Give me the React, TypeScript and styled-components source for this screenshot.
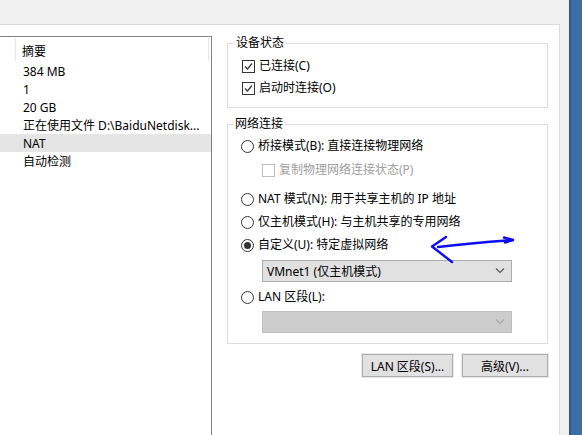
import React from 'react'
import styled, { createGlobalStyle } from 'styled-components'

const GlobalStyle = createGlobalStyle`
  html, body {
    margin: 0;
    padding: 0;
    overflow: hidden;
    background: #ffffff;
  }
  body {
    font-family: "Noto Sans", "Noto Sans CJK SC", sans-serif;
    font-size: 12px;
    color: #000000;
  }
`

const rows = [
  { text: '384 MB' },
  { text: '1' },
  { text: '20 GB' },
  { text: '正在使用文件 D:\\BaiduNetdisk...' },
  { text: 'NAT', selected: true },
  { text: '自动检测' },
]

const CheckMark = ({ disabled }: { disabled?: boolean }) => (
  <CheckBox $disabled={disabled}>
    {!disabled && (
      <svg width="11" height="11" viewBox="0 0 11 11">
        <path d="M2 5.5 L4.5 8 L9 2.5" fill="none" stroke="#333" strokeWidth="1.2" />
      </svg>
    )}
  </CheckBox>
)

const Chevron = ({ color }: { color: string }) => (
  <svg width="10" height="6" viewBox="0 0 10 6">
    <path d="M1 0.5 L5 4.5 L9 0.5" fill="none" stroke={color} strokeWidth="1.1" />
  </svg>
)

const App = () => {
  return (
    <Window>
      <GlobalStyle />
      <Dialog>
        <TopBar />
        <Body>
          <TabPage>
            <ListBox>
              <ListHeader>
                <HeaderCell $width={16} />
                <HeaderCell $width={193}>摘要</HeaderCell>
              </ListHeader>
              {rows.map((row, index) => (
                <ListRow key={index} $selected={row.selected}>
                  {row.text}
                </ListRow>
              ))}
            </ListBox>

            <RightPane>
              <GroupBox>
                <GroupTitle>设备状态</GroupTitle>
                <CheckRows>
                  <OptionRow $height={22}>
                    <CheckMark />
                    <Label>已连接(C)</Label>
                  </OptionRow>
                  <OptionRow $height={22}>
                    <CheckMark />
                    <Label>启动时连接(O)</Label>
                  </OptionRow>
                </CheckRows>
              </GroupBox>

              <NetGroup>
                <GroupTitle>网络连接</GroupTitle>
                <NetRows>
                  <OptionRow $top={4}>
                    <Radio />
                    <Label>桥接模式(B): 直接连接物理网络</Label>
                  </OptionRow>
                  <OptionRow $top={4} $indent={21}>
                    <CheckMark disabled />
                    <Label $disabled>复制物理网络连接状态(P)</Label>
                  </OptionRow>
                  <OptionRow $top={9}>
                    <Radio />
                    <Label>NAT 模式(N): 用于共享主机的 IP 地址</Label>
                  </OptionRow>
                  <OptionRow $top={3}>
                    <Radio />
                    <Label>仅主机模式(H): 与主机共享的专用网络</Label>
                  </OptionRow>
                  <OptionRow $top={3}>
                    <Radio $checked />
                    <Label>自定义(U): 特定虚拟网络</Label>
                  </OptionRow>
                  <Select $top={5}>
                    <span>VMnet1 (仅主机模式)</span>
                    <Chevron color="#555555" />
                  </Select>
                  <OptionRow $top={5}>
                    <Radio />
                    <Label>LAN 区段(L):</Label>
                  </OptionRow>
                  <Select $top={4} $disabled>
                    <span />
                    <Chevron color="#a8a8a8" />
                  </Select>
                </NetRows>
              </NetGroup>

              <ButtonRow>
                <Button $width={91}>LAN 区段(S)...</Button>
                <Button $width={86}>高级(V)...</Button>
              </ButtonRow>
            </RightPane>

            <Annotation width="95" height="40" viewBox="0 0 95 40">
              <path
                d="M21 7 L7 16.5 L27 32"
                fill="none"
                stroke="#0c0cf5"
                strokeWidth="2.4"
                strokeLinecap="round"
                strokeLinejoin="round"
              />
              <path
                d="M13 17 Q45 13 88 10"
                fill="none"
                stroke="#0c0cf5"
                strokeWidth="2.4"
                strokeLinecap="round"
              />
              <path
                d="M79 7.5 L88 10 L80 12.5"
                fill="none"
                stroke="#0c0cf5"
                strokeWidth="2.4"
                strokeLinecap="round"
                strokeLinejoin="round"
              />
            </Annotation>
          </TabPage>
          <Gutter />
        </Body>
      </Dialog>
      <BlueEdge />
    </Window>
  )
}

const Window = styled.div`
  display: flex;
  width: 582px;
  height: 435px;
`

const Dialog = styled.div`
  width: 569px;
  display: flex;
  flex-direction: column;
  background: #f0f0f0;
`

const TopBar = styled.div`
  height: 24px;
  flex-shrink: 0;
`

const Body = styled.div`
  flex: 1;
  display: flex;
`

const TabPage = styled.div`
  position: relative;
  width: 559px;
  display: flex;
  align-items: stretch;
  background: #ffffff;
  border-top: 1px solid #dadada;
  border-right: 1px solid #dadada;
`

const Gutter = styled.div`
  flex: 1;
`

const BlueEdge = styled.div`
  width: 13px;
  background: #3a6ea5;
  border-left: 2px solid #2c5b90;
  box-sizing: border-box;
`

const ListBox = styled.div`
  width: 211px;
  margin-top: 11px;
  border-top: 1px solid #828282;
  border-right: 1px solid #828282;
  display: flex;
  flex-direction: column;
`

const ListHeader = styled.div`
  height: 25px;
  display: flex;
`

const HeaderCell = styled.div<{ $width: number }>`
  width: ${(p) => p.$width}px;
  height: 23px;
  margin-top: 1px;
  padding: 3px 0 0 ${(p) => (p.$width > 20 ? 6 : 0)}px;
  box-sizing: border-box;
  border-right: 1px solid #e5e5e5;
  display: flex;
  align-items: center;
`

const ListRow = styled.div<{ $selected?: boolean }>`
  height: 18px;
  padding-left: 23px;
  display: flex;
  align-items: center;
  white-space: nowrap;
  background: ${(p) => (p.$selected ? '#e5e5e5' : 'transparent')};
`

const RightPane = styled.div`
  width: 321px;
  margin-left: 15px;
  padding-top: 18px;
  display: flex;
  flex-direction: column;
`

const GroupBox = styled.div`
  border: 1px solid #dcdcdc;
  padding: 0 13px 0 14px;
`

const NetGroup = styled(GroupBox)`
  margin-top: 16px;
  padding-left: 13px;
`

const GroupTitle = styled.div`
  width: fit-content;
  margin: -9px 0 0 -8px;
  padding: 0 2px;
  line-height: 16px;
  height: 16px;
  background: #ffffff;
`

const CheckRows = styled.div`
  padding: 4px 0 8px;
  display: flex;
  flex-direction: column;
`

const NetRows = styled.div`
  display: flex;
  flex-direction: column;
  padding-bottom: 10px;
`

const OptionRow = styled.div<{ $height?: number; $top?: number; $indent?: number }>`
  height: ${(p) => p.$height ?? 20}px;
  margin-top: ${(p) => p.$top ?? 0}px;
  margin-left: ${(p) => p.$indent ?? 0}px;
  display: flex;
  align-items: center;
  white-space: nowrap;
`

const Label = styled.span<{ $disabled?: boolean }>`
  margin-left: 4px;
  line-height: 16px;
  color: ${(p) => (p.$disabled ? '#a0a0a0' : '#000000')};
`

const CheckBox = styled.span<{ $disabled?: boolean }>`
  width: 13px;
  height: 13px;
  box-sizing: border-box;
  border: 1px solid ${(p) => (p.$disabled ? '#bcbcbc' : '#333333')};
  background: #ffffff;
  display: flex;
  align-items: center;
  justify-content: center;
  flex-shrink: 0;
`

const Radio = styled.span<{ $checked?: boolean }>`
  width: 13px;
  height: 13px;
  box-sizing: border-box;
  border: 1px solid #333333;
  border-radius: 50%;
  background: #ffffff;
  display: flex;
  align-items: center;
  justify-content: center;
  flex-shrink: 0;

  &::after {
    content: '';
    display: ${(p) => (p.$checked ? 'block' : 'none')};
    width: 7px;
    height: 7px;
    border-radius: 50%;
    background: #333333;
  }
`

const Select = styled.div<{ $top: number; $disabled?: boolean }>`
  width: 250px;
  height: 22px;
  box-sizing: border-box;
  margin: ${(p) => p.$top}px 0 0 21px;
  padding: 0 6px 0 4px;
  display: flex;
  align-items: center;
  justify-content: space-between;
  background: ${(p) => (p.$disabled ? '#cccccc' : '#e1e1e1')};
  border: 1px solid ${(p) => (p.$disabled ? '#bfbfbf' : '#adadad')};
  white-space: nowrap;
`

const ButtonRow = styled.div`
  display: flex;
  justify-content: flex-end;
  gap: 9px;
  margin-top: 10px;
`

const Button = styled.button<{ $width: number }>`
  width: ${(p) => p.$width}px;
  height: 23px;
  padding: 0;
  font: inherit;
  color: #000000;
  background: #e1e1e1;
  border: 1px solid #adadad;
  outline: 1px solid #e8e8e8;
  white-space: nowrap;
`

const Annotation = styled.svg`
  position: absolute;
  left: 425px;
  top: 205px;
  pointer-events: none;
`

export default App
